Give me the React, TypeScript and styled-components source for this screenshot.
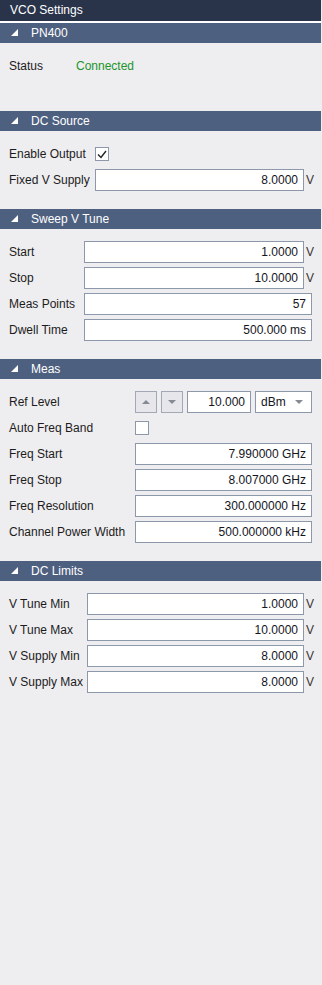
import * as React from 'react'
import styled, { createGlobalStyle } from 'styled-components'

const GlobalStyle = createGlobalStyle`
    html, body {
        margin: 0;
        padding: 0;
        background: #eeedf0;
    }
    body {
        font-family: "Liberation Sans", Arial, sans-serif;
        font-size: 12px;
        color: #1c1c1c;
    }
`

const Panel = styled.div`
    width: 322px;
    min-height: 985px;
    background: #eeedf0;
    box-sizing: border-box;
    padding-right: 1px;
`
const TitleBar = styled.div`
    height: 21px;
    line-height: 21px;
    padding-left: 10px;
    background: #29344a;
    color: #ffffff;
    border-bottom: 2px solid #ffffff;
`
const SectionHeader = styled.div`
    height: 20px;
    display: flex;
    align-items: center;
    background: #4e607f;
    color: #ffffff;
`
const Chevron = styled.svg`
    width: 7px;
    height: 7px;
    margin: 0 13px 2px 11px;
`
const SectionBody = styled.div<{ $labelWidth: number; $extra?: number }>`
    display: grid;
    grid-template-columns: ${(p) => p.$labelWidth}px 1fr;
    row-gap: 4px;
    padding: 12px 9px ${(p) => 18 + (p.$extra || 0)}px 9px;
`
const Label = styled.div`
    height: 22px;
    line-height: 22px;
    white-space: nowrap;
    color: #1c1c1c;
`
const Field = styled.div`
    display: flex;
    align-items: center;
    height: 22px;
    min-width: 0;
`
const Status = styled.span<{ $ok?: boolean }>`
    color: ${(p) => (p.$ok ? '#21952b' : '#c02020')};
`
const TextBox = styled.input`
    flex: 1;
    min-width: 0;
    height: 22px;
    box-sizing: border-box;
    border: 1px solid #8e98ab;
    background: #ffffff;
    padding: 0 5px 0 4px;
    margin: 0;
    text-align: right;
    font-family: "Liberation Sans", Arial, sans-serif;
    font-size: 12px;
    color: #14141c;
    outline: none;
`
const Unit = styled.span`
    width: 8px;
    padding-left: 2px;
    margin-right: -2px;
    color: #3a3430;
`
const Check = styled.div`
    width: 14px;
    height: 14px;
    box-sizing: border-box;
    border: 1px solid #8e98ab;
    background: #ffffff;
    display: flex;
    align-items: center;
    justify-content: center;
`
const SpinButton = styled.div`
    width: 22px;
    height: 22px;
    box-sizing: border-box;
    border: 1px solid #a2a8b6;
    background: #e7e7eb;
    display: flex;
    align-items: center;
    justify-content: center;
    margin-right: 4px;
`
const SmallBox = styled(TextBox)`
    flex: 0 0 64px;
    margin-right: 4px;
`
const Select = styled.div`
    flex: 1;
    height: 22px;
    box-sizing: border-box;
    border: 1px solid #8e98ab;
    background: #ffffff;
    display: flex;
    align-items: center;
    justify-content: space-between;
    padding: 0 8px 0 5px;
    color: #14141c;
`

const Arrow = ({ up }: { up?: boolean }) => (
    <svg width="8" height="4" viewBox="0 0 8 4">
        <polygon points={up ? '0,4 8,4 4,0' : '0,0 8,0 4,4'} fill="#858a94" />
    </svg>
)

const Section = ({ title }: { title: string }) => (
    <SectionHeader>
        <Chevron viewBox="0 0 7 7">
            <polygon points="7,0 7,7 0,7" fill="#ffffff" />
        </Chevron>
        {title}
    </SectionHeader>
)

const ValueRow = ({ label, value, unit }: { label: string; value: string; unit?: string }) => (
    <>
        <Label>{label}</Label>
        <Field>
            <TextBox readOnly value={value} />
            {unit && <Unit>{unit}</Unit>}
        </Field>
    </>
)

const CheckRow = ({ label, checked }: { label: string; checked: boolean }) => (
    <>
        <Label>{label}</Label>
        <Field>
            <Check>
                {checked && (
                    <svg width="10" height="9" viewBox="0 0 10 9">
                        <polyline points="1,4.5 4,7.5 9,1" fill="none" stroke="#222" strokeWidth="1.4" />
                    </svg>
                )}
            </Check>
        </Field>
    </>
)

export default function App() {
    return (
        <Panel>
            <GlobalStyle />
            <TitleBar>VCO Settings</TitleBar>

            <Section title="PN400" />
            <SectionBody $labelWidth={67} $extra={16}>
                <Label>Status</Label>
                <Label>
                    <Status $ok>Connected</Status>
                </Label>
            </SectionBody>

            <Section title="DC Source" />
            <SectionBody $labelWidth={86}>
                <CheckRow label="Enable Output" checked />
                <ValueRow label="Fixed V Supply" value="8.0000" unit="V" />
            </SectionBody>

            <Section title="Sweep V Tune" />
            <SectionBody $labelWidth={75}>
                <ValueRow label="Start" value="1.0000" unit="V" />
                <ValueRow label="Stop" value="10.0000" unit="V" />
                <ValueRow label="Meas Points" value="57" />
                <ValueRow label="Dwell Time" value="500.000 ms" />
            </SectionBody>

            <Section title="Meas" />
            <SectionBody $labelWidth={126}>
                <Label>Ref Level</Label>
                <Field>
                    <SpinButton>
                        <Arrow up />
                    </SpinButton>
                    <SpinButton>
                        <Arrow />
                    </SpinButton>
                    <SmallBox readOnly value="10.000" />
                    <Select>
                        <span>dBm</span>
                        <Arrow />
                    </Select>
                </Field>
                <CheckRow label="Auto Freq Band" checked={false} />
                <ValueRow label="Freq Start" value="7.990000 GHz" />
                <ValueRow label="Freq Stop" value="8.007000 GHz" />
                <ValueRow label="Freq Resolution" value="300.000000 Hz" />
                <ValueRow label="Channel Power Width" value="500.000000 kHz" />
            </SectionBody>

            <Section title="DC Limits" />
            <SectionBody $labelWidth={78}>
                <ValueRow label="V Tune Min" value="1.0000" unit="V" />
                <ValueRow label="V Tune Max" value="10.0000" unit="V" />
                <ValueRow label="V Supply Min" value="8.0000" unit="V" />
                <ValueRow label="V Supply Max" value="8.0000" unit="V" />
            </SectionBody>
        </Panel>
    )
}
